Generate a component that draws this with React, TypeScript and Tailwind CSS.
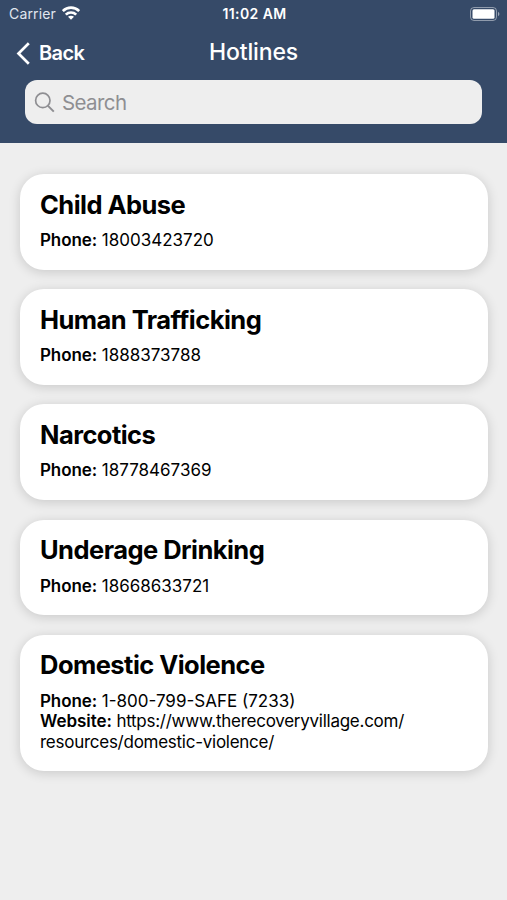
const hotlines = [
  { name: 'Child Abuse', phone: '18003423720' },
  { name: 'Human Trafficking', phone: '1888373788' },
  { name: 'Narcotics', phone: '18778467369' },
  { name: 'Underage Drinking', phone: '18668633721' },
  {
    name: 'Domestic Violence',
    phone: '1-800-799-SAFE (7233)',
    website: { host: 'https://www.therecoveryvillage.com/', path: 'resources/domestic-violence/' },
  },
]

function StatusBar() {
  return (
    <div className="grid h-[27px] grid-cols-[1fr_auto_1fr] items-center pl-[9px] pr-[7px] text-[14px]">
      <div className="flex items-center gap-1.5 text-[#e1e6ef]">
        <span className="tracking-[0.15px]">Carrier</span>
        <svg className="-mt-px" width="18" height="14" viewBox="0 0 18 14" fill="none" stroke="#fff" strokeWidth="2.7">
          <path d="M.8 5C5.4.4 12.6.4 17.2 5" />
          <path d="M3.8 8.6c2.9-2.8 7.5-2.8 10.4 0" />
          <path d="M9 13.8 6 10.8c1.6-1.5 4.4-1.5 6 0z" fill="#fff" stroke="none" />
        </svg>
      </div>
      <span className="font-semibold tracking-[0.4px]">11:02 AM</span>
      <div className="flex justify-end">
        <svg width="30" height="14" viewBox="0 0 30 14">
          <rect x="0.5" y="0.5" width="26" height="13" rx="3.5" fill="none" stroke="#fff" strokeOpacity="0.45" />
          <rect x="2.5" y="2.3" width="22" height="9.4" rx="1.5" fill="#fff" />
          <path d="M28 4.8c1.9.8 1.9 3.6 0 4.4z" fill="#fff" fillOpacity="0.5" />
        </svg>
      </div>
    </div>
  )
}

export default function App() {
  return (
    <div className="h-[900px] w-[507px] overflow-hidden bg-[#eeeeee] font-['Inter',sans-serif] text-black">
      {/* Header */}
      <header className="h-[142.5px] bg-[#364a68] text-white">
        <StatusBar />
        <div className="grid h-[50px] grid-cols-[1fr_auto_1fr] items-center px-4">
          <div className="flex items-center gap-[9px] pt-0.5 text-[20px] font-semibold tracking-[-0.6px]">
            <svg width="14" height="23" viewBox="0 0 14 23" fill="none" stroke="currentColor" strokeWidth="2.7">
              <path d="M12.8 1.2 2.5 11.5l10.3 10.3" />
            </svg>
            Back
          </div>
          <h1 className="text-[23px] font-medium tracking-[-0.15px]">Hotlines</h1>
        </div>
        <div className="mx-[25px] mt-[3px] flex h-11 items-center gap-[7px] rounded-xl bg-[#eeeeee] pl-[9px] text-[20.5px] tracking-[-0.6px] text-[#8e8e92]">
          <svg width="21" height="21" viewBox="0 0 21 21" fill="none" stroke="currentColor" strokeWidth="1.7">
            <circle cx="8.8" cy="8.4" r="7.2" />
            <path d="m13.8 13.6 6 6" strokeWidth="2" />
          </svg>
          <span className="pt-0.5">Search</span>
        </div>
      </header>

      {/* Hotline cards */}
      <main className="flex flex-col gap-[19.5px] pl-5 pr-[19.5px] pt-[31.5px]">
        {hotlines.map((h) => (
          <section
            key={h.name}
            className="rounded-[24px] bg-white px-5 pb-[19.2px] pt-[14.5px] shadow-[0_2px_12px_rgba(0,0,0,0.16)]"
          >
            <h2 className="text-[25.5px] font-bold leading-8 tracking-[-0.54px]">{h.name}</h2>
            <div className="mt-[9.5px] text-[17px] leading-[20.5px]">
              <p>
                <b className="font-semibold tracking-[-0.1px]">Phone:</b> {h.phone}
              </p>
              {h.website && (
                <p className="tracking-[-0.26px]">
                  <b className="font-semibold tracking-[-0.05px]">Website:</b>{' '}
                  {h.website.host}
                  <wbr />
                  {h.website.path}
                </p>
              )}
            </div>
          </section>
        ))}
      </main>
    </div>
  )
}
